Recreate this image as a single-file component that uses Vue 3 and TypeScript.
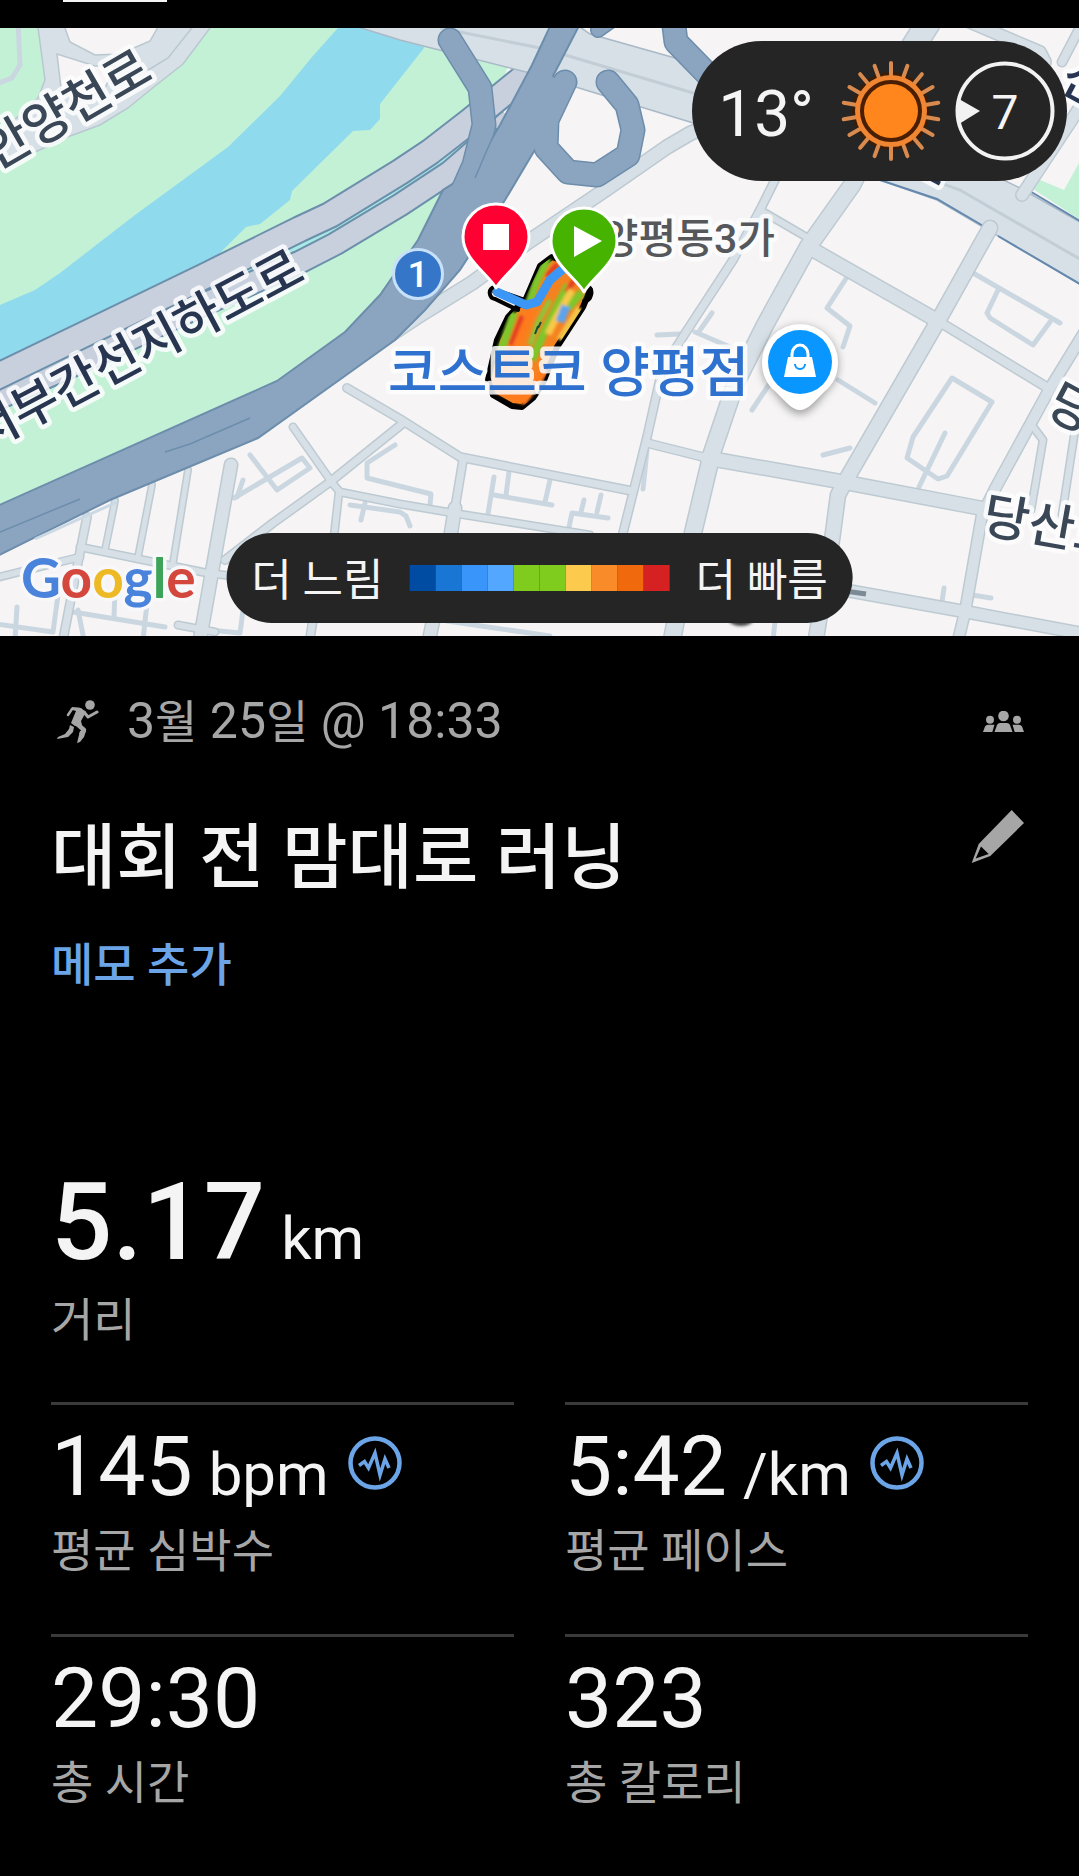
<script setup lang="ts">
interface Metric {
  value: string
  unit?: string
  label: string
  chart?: boolean
}

const metrics: Metric[] = [
  { value: '145', unit: 'bpm', label: '평균 심박수', chart: true },
  { value: '5:42', unit: '/km', label: '평균 페이스', chart: true },
  { value: '29:30', label: '총 시간' },
  { value: '323', label: '총 칼로리' },
]

const paceColors: string[] = [
  '#004ca3', '#1976d5', '#3a95fb', '#54a7ff', '#80cc1e',
  '#80cc1e', '#fccb4e', '#f98b28', '#f0690d', '#d62122',
]

const rays: number[] = Array.from({ length: 18 }, (_, i) => i * 20)

interface Road {
  d: string
  w: number
}

const expressways: Road[] = [
  { d: 'M-10 402L85 360L200 306L300 262L335 244L400 205L450 172L510 120', w: 25 },
  { d: 'M-10 380L85 334L205 276L300 229L330 215L400 172L430 152L470 121L530 72', w: 28 },
]

const roads: Road[] = [
  { d: 'M720 122L691 133L667 147L608 188L528 242L472 283L417 317L355 358', w: 16 },
  { d: 'M880 130L852 185L808 247L765 325L735 385L712 453L693 533L671 645', w: 19 },
  { d: 'M785 160L760 210L733 260L686 332L662 370L647 437L620 545', w: 10 },
  { d: 'M760 210L808 238', w: 9 },
  { d: 'M808 247L938 321', w: 16 },
  { d: 'M938 321L1048 388', w: 11 },
  { d: 'M990 228L938 321L846 480L838 495L832 540L815 645', w: 17 },
  { d: 'M647 443L707 458', w: 10 },
  { d: 'M707 458L843 482L985 509', w: 16 },
  { d: 'M1095 315L1049 390L996 487L982 515L965 612L957 645', w: 13 },
  { d: 'M780 578L850 591L967 612L1085 634', w: 14 },
  { d: 'M1034 428L1043 440L1031 510', w: 9 },
  { d: 'M1075 430L1062 515', w: 9 },
  { d: 'M1090 92L1022 195', w: 14 },
  { d: 'M930 20L905 60', w: 26 },
  { d: 'M965 20L1040 52L1045 62', w: 14 },
  { d: 'M1085 18L1062 62', w: 11 },
  { d: 'M347 388L400 419L460 457L632 491', w: 10 },
  { d: 'M293 427L333 484L340 492L400 504L453 513L590 535', w: 9 },
  { d: 'M402 424L330 482L273 523L225 560', w: 10 },
  { d: 'M339 492L333 545', w: 9 },
  { d: 'M463 460L455 508', w: 10 },
  { d: 'M455 508L449 545L428 645', w: 15 },
  { d: 'M231 465L199 645', w: 15 },
  { d: 'M188 470L173 563', w: 8 },
  { d: 'M152 485L138 557', w: 8 },
  { d: 'M115 501L105 550', w: 8 },
  { d: 'M87 517L79 557L62 645', w: 10 },
  { d: 'M80 547L207 573L232 576', w: 9 },
  { d: 'M-5 578L80 557', w: 9 },
  { d: 'M178 625L215 632', w: 9 },
  { d: 'M316 600L309 645', w: 10 },
]

const lanes: string[] = [
  'M18 20L20 65L12 78L-4 84',
  'M952 378L992 402L947 476L938 479L907 458L913 437Z',
  'M945 433L919 487',
  'M847 277L827 308L850 326L843 347',
  'M838 380L875 403',
  'M823 455L850 448',
  'M752 410L772 380',
  'M973 273L1060 323',
  'M998 290L987 313L990 318L1033 345L1050 322',
  'M250 455L277 490L310 468L302 458L234 498',
  'M243 480L237 497',
  'M395 445L367 463L367 478L431 494L430 505',
  'M350 505L400 512L406 516L410 526',
  'M365 503L361 520',
  'M494 477L488 514',
  'M494 495L552 505',
  'M509 472L506 495',
  'M550 480L545 502',
  'M568 532L572 513L608 518',
  'M584 500L581 512',
  'M601 495L597 512',
  'M647 450L643 489',
  'M657 335L680 334',
  'M712 313L700 330',
  'M695 332L730 347',
  'M-4 624L53 632L58 595',
  'M17 607L15 640',
  'M73 612L165 627',
  'M78 610L84 640',
  'M147 603L143 640',
  'M115 590L114 617',
  'M243 610L240 633L210 630',
  'M447 621L550 636',
  'M776 612L773 640',
  'M944 588L942 602',
  'M972 595L991 598',
]
</script>

<template>
  <main class="activity">
    <div class="tabs"><span class="tab-line"></span></div>

    <section class="map">
      <svg class="map-art" viewBox="0 28 1079 608" role="img" aria-label="러닝 경로 지도">
        <defs>
          <filter id="soft" x="-20%" y="-20%" width="140%" height="140%"><feGaussianBlur stdDeviation="1.6" /></filter>
          <filter id="shade" x="-40%" y="-40%" width="180%" height="180%"><feGaussianBlur stdDeviation="4" /></filter>
          <clipPath id="track"><path d="M540 266L552 257L566 262L586 293L583 307L557 347L543 383L533 398L522 407L512 406L493 395L488 380L497 340L508 317L524 300Z" /></clipPath>
        </defs>

        <rect x="0" y="28" width="1079" height="608" fill="#f6f4f5" />
        <path fill="#c3f1d5" d="M0 28H520L505 75L480 140L440 200L420 250L385 300L345 340L280 390L0 515Z" />
        <path fill="#d7e0e6" stroke="#b9c8d0" stroke-width="1.5" d="M37 20H216L183 64L155 86L128 108L100 125L70 136L35 152L-5 170V138L38 98L45 80Z" />
        <path fill="#f6f4f5" stroke="#b9c8d0" stroke-width="1.5" d="M62 20L70 42L95 55L120 54L150 41L162 20ZM57 54L61 88L75 104L105 88L115 66L95 66Z" />
        <path fill="none" stroke="#b9c8d0" stroke-width="1.5" d="M195 24L168 58L140 75" />
        <path fill="#90daee" d="M345 20L312 57L280 96L228 147L135 215L60 273L35 290L0 305V390L65 345L215 258L246 227L260 224L290 200L292 191L353 131L370 130L380 119V104L424 48L430 20Z" />

        <g fill="none" stroke-linejoin="round">
          <path stroke="#a7e9e4" stroke-width="8" d="M200 291L290 251L330 232L398 190L460 146" />
          <template v-for="r in expressways" :key="r.d">
            <path :d="r.d" stroke="#6c8fab" :stroke-width="r.w" />
            <path :d="r.d" stroke="#c8d0dd" :stroke-width="r.w - 4" />
          </template>
        </g>

        <path fill="#d7e0e6" stroke="#a9b9c7" stroke-width="1.5" d="M355 26L400 40L530 73L690 122L760 145L880 180L937 200L1085 287V225L1020 188L900 130L700 65L590 34L570 20Z" />
        <path fill="none" stroke="#6488ae" stroke-width="2" d="M880 180L937 199L985 227M998 236L1085 287M1028 190L1085 224" />
        <path fill="none" stroke="#c2cdd5" stroke-width="3" d="M440 28L545 49L700 95L960 190L1085 262" />
        <path fill="#c3f1d5" d="M1079 163L1064 190L1040 180L1033 189L1079 219Z" />

        <g fill="none" stroke="#cbd7e0" stroke-width="5" stroke-linecap="round" stroke-linejoin="round">
          <path v-for="d in lanes" :key="d" :d="d" />
        </g>
        <g fill="none" stroke="#bdcad2" stroke-linecap="round" stroke-linejoin="round">
          <path v-for="r in roads" :key="r.d" :d="r.d" :stroke-width="r.w" />
        </g>
        <g fill="none" stroke="#d7e0e6" stroke-linecap="round" stroke-linejoin="round">
          <path v-for="r in roads" :key="r.d" :d="r.d" :stroke-width="r.w - 3" />
        </g>

        <g fill="none" stroke="#6c8dab" stroke-linecap="round" stroke-linejoin="round">
          <path stroke-width="25" d="M565 82L547 120L546 148L568 172L597 175L628 155L633 130L627 105L608 82" />
          <path stroke-width="25" d="M672 10L676 42L715 82" />
          <path stroke-width="25" d="M450 40L480 88L484 125L474 165L445 230" />
          <path stroke-width="16" d="M615 18L598 30" />
        </g>
        <path fill="#8ba5c1" stroke="#6c8dab" stroke-width="2" d="M-5 507L277 381L345 332L380 295L418 240L443 190L472 172L500 125L532 65L553 20H582L553 76L568 86L558 115L533 153L505 200L460 270L425 310L395 340L370 358L258 438L110 500L-5 557Z" />
        <g fill="none" stroke="#8ba5c1" stroke-linecap="round" stroke-linejoin="round">
          <path stroke-width="22" d="M565 82L547 120L546 148L568 172L597 175L628 155L633 130L627 105L608 82" />
          <path stroke-width="22" d="M672 10L676 42L715 82" />
          <path stroke-width="22" d="M450 40L480 88L484 125L474 165L445 230" />
          <path stroke-width="13" d="M615 18L598 30" />
        </g>
        <path fill="none" stroke="#6c8dab" stroke-width="1.5" d="M475 178L487 150L497 128M250 418L190 444L165 452M0 532L80 499" />
        <path fill="none" stroke="#cbd9e4" stroke-width="3" d="M35 539L117 502" />
        <path stroke="#7c8a96" stroke-width="5" d="M845 591L866 594" />
        <ellipse cx="741" cy="618" rx="13" ry="8" fill="#444" filter="url(#soft)" />

        <g font-size="50">
          <text class="road-name" x="0" y="19" transform="translate(66 108) rotate(-30)">안양천로</text>
          <text class="road-name dark" x="0" y="19" transform="translate(136 349) rotate(-28)">서부간선지하도로</text>
          <text class="road-name" x="0" y="19" transform="translate(1052 525) rotate(10)">당산로</text>
          <text class="road-name" x="0" y="19" transform="translate(1073 407) rotate(28)">당</text>
          <text class="road-name dark" x="0" y="19" transform="translate(1086 82) rotate(28)">선</text>
          <text class="road-name dark" x="0" y="19" transform="translate(929 160) rotate(28)">로</text>
        </g>
        <text class="district" x="775" y="253" font-size="41">양평동3가</text>

        <path d="M493 290L525 301L540 266L552 257L566 262L590 290L583 307L557 347L543 383L533 398L522 407L512 406L493 395L488 380L497 340L508 317L524 300" fill="#f58220" stroke="#000" stroke-width="6" stroke-linejoin="round" />
        <path d="M495 287C487 289 489 298 495 299L518 310M587 287C595 287 591 303 584 301" fill="none" stroke="#000" stroke-width="4" stroke-linecap="round" />
        <g clip-path="url(#track)">
          <g fill="none" stroke-width="7" filter="url(#soft)">
            <path stroke="#ff7a1a" stroke-width="9" d="M532 310L514 345L500 390L524 400L545 370" />
            <path stroke="#7ec62a" stroke-width="8" d="M548 258L536 282L528 306M514 312L504 342L496 360M568 285L546 328L532 360M582 292L568 308" />
            <path stroke="#e33d22" stroke-width="5" d="M558 264L546 276M522 316L510 345M576 278L566 292" />
            <path stroke="#f7c94a" d="M572 290L556 318L548 334M580 308L560 340" />
            <path stroke="#5aa4ee" stroke-width="9" d="M566 306L560 322" />
            <path stroke="#8bc63a" stroke-width="5" d="M550 300L538 322L530 345" />
          </g>
          <path stroke="#1b4a35" stroke-width="2" d="M541 322L538 328M538 326L535 334" />
        </g>
        <path d="M497 292L526 305L537 302L550 280L564 268" fill="none" stroke="#3b96f5" stroke-width="9" stroke-linejoin="round" stroke-linecap="round" />
        <text class="place" x="388" y="392" font-size="54">코스트코 양평점</text>

        <circle cx="418" cy="274" r="24.500" fill="#3676c8" stroke="#c8e1fb" stroke-width="3" />
        <text class="badge" x="418" y="287" font-size="37">1</text>

        <g stroke="#fff" stroke-width="3" stroke-linejoin="round">
          <path fill="#ff0032" d="M496 288C488 274 463 259 463 237A33 33 0 0 1 529 237C529 259 504 274 496 288Z" />
          <path fill="#45b300" d="M584 292C576 278 551 263 551 241A33 33 0 0 1 617 241C617 263 592 278 584 292Z" />
        </g>
        <rect x="483" y="224" width="26" height="26" fill="#fff" />
        <path d="M574 226L602 241L574 257Z" fill="#fff" />

        <path d="M800 414C790 414 782 402 774 392C766 384 762 376 762 364A38 38 0 0 1 838 364C838 376 834 384 826 392C818 402 810 414 800 414Z" fill="#666" opacity="0.6" filter="url(#shade)" />
        <path d="M800 410C792 410 786 402 776 392C766 384 762 374 762 362A38 38 0 0 1 838 362C838 374 834 384 824 392C814 402 808 410 800 410Z" fill="#fff" />
        <circle cx="800" cy="362" r="32" fill="#0a96ff" />
        <path d="M788 357H812L816 377H784Z" fill="#fff" />
        <path d="M792 358V354A8 9 0 0 1 808 354V358" fill="none" stroke="#fff" stroke-width="3" />
        <path d="M795 364A5 5 0 0 0 805 364" fill="none" stroke="#0a96ff" stroke-width="2" />

        <text class="logo" x="21" y="598" font-size="55"><tspan fill="#4a83dc">G</tspan><tspan fill="#d4473c">o</tspan><tspan fill="#edb925">o</tspan><tspan fill="#4a83dc">g</tspan><tspan fill="#3ba458">l</tspan><tspan fill="#d4473c">e</tspan></text>
      </svg>

      <div class="weather">
        <span class="temp">13°</span>
        <svg class="sun" viewBox="-50 -50 100 100" aria-hidden="true">
          <circle r="39" fill="#3a1c07" />
          <g stroke="#d98a4e" stroke-width="4" stroke-linecap="round">
            <line v-for="a in rays" :key="a" x1="0" y1="-36" x2="0" y2="-48" :transform="`rotate(${a})`" />
          </g>
          <circle r="33.500" fill="#4a1e02" stroke="#f08532" stroke-width="5" />
          <circle r="27" fill="#ff861c" />
        </svg>
        <span class="wind">
          <svg viewBox="0 0 100 100" aria-hidden="true">
            <circle cx="50" cy="50" r="47.500" fill="none" stroke="#f2f2f2" stroke-width="4" />
            <path d="M4 38L25 50L4 63Z" fill="#f2f2f2" />
          </svg>
          <span class="wind-speed">7</span>
        </span>
      </div>

      <div class="legend">
        <span class="pace">더 느림</span>
        <span class="scale"><i v-for="(c, i) in paceColors" :key="i" :style="{ background: c }"></i></span>
        <span class="pace">더 빠름</span>
      </div>
    </section>

    <header class="head">
      <div class="meta">
        <svg class="runner" viewBox="0 0 42 43" fill="none" stroke="#a6a6a6" stroke-linejoin="round" aria-hidden="true">
          <circle cx="33" cy="5" r="4.800" fill="#a6a6a6" stroke="none" />
          <path d="M15 7L24 8L29 12L24 21L25 25L18 26L14 23L19 11L14 9Z" fill="#a6a6a6" stroke="none" />
          <path stroke-width="2.500" stroke-linecap="round" d="M11 15L15 9L22 9" />
          <path stroke-width="3" stroke-linecap="round" d="M27 12L31 17L40 12" />
          <path stroke-width="4.500" d="M19 23L27 30L24 35" />
          <path d="M23 31L29 31L27 37L23 42L20 43Z" fill="#a6a6a6" stroke="none" />
          <path d="M13 25L17 27L16 32L11 37L0 39L1 37L8 34L12 29Z" fill="#a6a6a6" stroke="none" />
        </svg>
        <time class="date">3<small>월</small> 25<small>일</small> @ 18:33</time>
        <svg class="group" viewBox="0 0 41 21" fill="#a6a6a6" role="img" aria-label="공개 범위">
          <circle cx="20.500" cy="5" r="5.300" />
          <path d="M11.500 21L14 14Q15 12 17 12H24Q26 12 27 14L29.500 21Z" />
          <circle cx="7" cy="8.700" r="4" />
          <circle cx="34" cy="8.700" r="4" />
          <path d="M0 21L2 15.500Q3 13.700 5 13.700H11.500L9.300 21ZM41 21L39 15.500Q38 13.700 36 13.700H29.500L31.700 21Z" />
        </svg>
      </div>
      <div class="title-row">
        <h1>대회 전 맘대로 러닝</h1>
        <button class="edit" type="button" aria-label="제목 편집">
          <svg viewBox="0 0 53 53" aria-hidden="true"><path fill="#a6a6a6" fill-rule="evenodd" d="M40.700 0L53 13L19.300 46L0.700 53L7.700 34ZM10 36.500L4.700 48.500L17.700 44Z" /></svg>
        </button>
      </div>
      <button class="memo" type="button">메모 추가</button>
    </header>

    <section class="distance">
      <div class="value big"><strong>5.17</strong><span class="unit">km</span></div>
      <div class="label">거리</div>
    </section>

    <section class="grid">
      <div v-for="m in metrics" :key="m.label" class="cell">
        <div class="value">
          <span>{{ m.value }}</span>
          <span v-if="m.unit" class="unit">{{ m.unit }}</span>
          <button v-if="m.chart" class="wave" type="button" :aria-label="m.label + ' 그래프'">
            <svg viewBox="0 0 60 60" fill="none" stroke="#6ba5e7" aria-hidden="true">
              <circle cx="30" cy="30" r="24.500" stroke-width="4.500" />
              <path stroke-width="3.500" stroke-miterlimit="8" d="M14 32.500L19.500 28.500L23.500 35L30 20L35 42L40 26L44 35" />
            </svg>
          </button>
        </div>
        <div class="label">{{ m.label }}</div>
      </div>
    </section>
  </main>
</template>

<style>
body {
  background: #000;
}
</style>

<style scoped>
.activity {
  min-height: 100vh;
  background: #000;
  color: #f4f4f4;
  font-family: Roboto, "Noto Sans CJK KR", sans-serif;
}
.tabs {
  height: 28px;
  padding-left: 63px;
}
.tab-line {
  display: block;
  width: 104px;
  height: 2px;
  background: #f4f4f4;
}
.map {
  position: relative;
  overflow: hidden;
}
.map-art {
  display: block;
  width: 100%;
  height: auto;
}
.road-name,
.district,
.place {
  font-weight: 500;
  paint-order: stroke;
  stroke: #fdfdfe;
  stroke-opacity: 0.85;
  stroke-width: 9px;
  stroke-linejoin: round;
}
.road-name {
  fill: #3a4757;
  text-anchor: middle;
}
.road-name.dark {
  fill: #283550;
}
.district {
  fill: #55575a;
  text-anchor: end;
}
.place {
  fill: #2e71cf;
}
.badge {
  fill: #fff;
  font-weight: 500;
  text-anchor: middle;
}
.logo {
  font-family: Lato, sans-serif;
  font-weight: 700;
  paint-order: stroke;
  stroke: #f8f8fa;
  stroke-width: 7px;
  stroke-linejoin: round;
}
.weather {
  position: absolute;
  top: 13px;
  right: 12px;
  height: 140px;
  padding: 0 12px 0 26px;
  display: flex;
  align-items: center;
  border-radius: 70px;
  background: #252525;
}
.temp {
  padding-top: 8px;
  font-size: 64px;
  line-height: 76px;
}
.sun {
  width: 100px;
  height: 100px;
  margin: 0 14px 0 27px;
}
.wind {
  display: grid;
  width: 100px;
  height: 100px;
}
.wind > * {
  grid-area: 1 / 1;
}
.wind-speed {
  padding-top: 2px;
  font-size: 48px;
  line-height: 100px;
  text-align: center;
}
.legend {
  position: absolute;
  bottom: 13px;
  left: 50%;
  transform: translateX(-50%);
  height: 90px;
  padding: 0 25px;
  display: flex;
  align-items: center;
  gap: 26px;
  border-radius: 45px;
  background: #252525;
  font-size: 44px;
  line-height: 60px;
  white-space: nowrap;
}
.pace {
  padding-top: 6px;
}
.scale {
  display: flex;
}
.scale i {
  width: 26px;
  height: 26px;
}
.head {
  padding: 55px 55px 0 51px;
}
.meta {
  display: flex;
  align-items: center;
  color: #a6a6a6;
}
.runner {
  width: 42px;
  height: 43px;
  margin: 0 28px 0 6px;
}
.date {
  flex: 1;
  font-size: 50px;
  line-height: 60px;
}
.date small {
  font-size: 46px;
  line-height: 50px;
}
.group {
  width: 41px;
  height: 21px;
}
.title-row {
  display: flex;
  justify-content: space-between;
  align-items: flex-start;
  margin-top: 59px;
}
h1 {
  margin: 0;
  font-size: 71px;
  font-weight: 500;
  line-height: 96px;
}
button {
  padding: 0;
  border: 0;
  background: none;
  font-family: inherit;
  cursor: pointer;
}
button svg {
  display: block;
  width: 100%;
  height: 100%;
}
.edit {
  width: 53px;
  height: 53px;
}
.memo {
  display: block;
  margin-top: 29px;
  color: #6ba5e7;
  font-size: 46px;
  font-weight: 500;
  line-height: 60px;
}
.distance {
  padding: 163px 51px 52px;
}
.value {
  display: flex;
  align-items: baseline;
  gap: 16px;
  font-size: 84px;
  line-height: 100px;
}
.value.big {
  font-size: 108px;
  line-height: 128px;
}
.big strong {
  font-weight: 500;
}
.value .unit {
  font-size: 60px;
  line-height: 60px;
}
.wave {
  align-self: flex-start;
  width: 60px;
  height: 60px;
  margin-top: 16px;
}
.label {
  margin-top: 4px;
  color: #a6a6a6;
  font-size: 46px;
  line-height: 60px;
}
.grid {
  display: grid;
  grid-template-columns: 1fr 1fr;
  column-gap: 51px;
  padding: 0 51px;
}
.cell {
  padding: 12px 0 53px;
  border-top: 3px solid #3a3a3a;
}
</style>
